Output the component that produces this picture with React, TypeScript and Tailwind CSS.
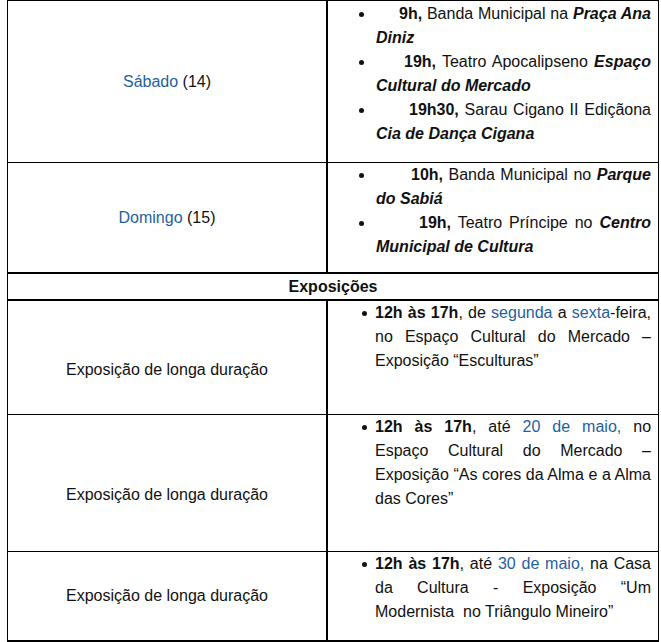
const blue = "text-[#1f5f9e]";

// one visual line of a justified paragraph; last lines are left aligned
const Line = ({ children, last = false, indent = "" }: { children: React.ReactNode; last?: boolean; indent?: string }) => (
  <span className={`block whitespace-nowrap ${indent} ${last ? "text-left" : "text-justify [text-align-last:justify]"}`}>
    {children}
  </span>
);

const Item = ({ children, dot = "big" }: { children: React.ReactNode; dot?: "big" | "small" }) => (
  <div className="flex">
    {dot === "big" ? (
      <div className="flex w-[48px] shrink-0 justify-end pr-[12px] pt-[10px]">
        <span className="block h-[5px] w-[5px] rounded-full bg-[#111]" />
      </div>
    ) : (
      <div className="flex w-[47px] shrink-0 justify-end pr-[8px] pt-[10px]">
        <span className="block h-[5px] w-[5px] rounded-full bg-[#111]" />
      </div>
    )}
    <div className="min-w-0 flex-1">{children}</div>
  </div>
);

const Place = ({ children }: { children: React.ReactNode }) => <b className="italic">{children}</b>;

const App = () => (
  <div className="h-[642px] w-[661px] overflow-hidden bg-white font-['Liberation_Sans',Arial,sans-serif] text-[16px] leading-6 text-[#111]">
    <div className="ml-[7px] w-[652px] border-x border-t border-black">
      {/* Sábado */}
      <div className="flex h-[162px] border-b border-black">
        <div className="flex w-[318px] items-center justify-center">
          <span>
            <span className={blue}>Sábado</span> (14)
          </span>
        </div>
        <div className="flex-1 border-l-2 border-black pr-[7px] pt-[1px]">
          <Item>
            <Line indent="pl-[23px]">
              <b>9h,</b> Banda Municipal na <Place>Praça Ana</Place>
            </Line>
            <Line last>
              <Place>Diniz</Place>
            </Line>
          </Item>
          <Item>
            <Line indent="pl-[28px]">
              <b>19h,</b> Teatro Apocalipseno <Place>Espaço</Place>
            </Line>
            <Line last>
              <Place>Cultural do Mercado</Place>
            </Line>
          </Item>
          <Item>
            <Line indent="pl-[33px]">
              <b>19h30,</b> Sarau Cigano II Ediçãona
            </Line>
            <Line last>
              <Place>Cia de Dança Cigana</Place>
            </Line>
          </Item>
        </div>
      </div>

      {/* Domingo */}
      <div className="flex h-[111px] border-b-2 border-black">
        <div className="flex w-[318px] items-center justify-center">
          <span>
            <span className={blue}>Domingo</span> (15)
          </span>
        </div>
        <div className="flex-1 border-l-2 border-black pr-[7px]">
          <Item>
            <Line indent="pl-[35px]">
              <b>10h,</b> Banda Municipal no <Place>Parque</Place>
            </Line>
            <Line last>
              <Place>do Sabiá</Place>
            </Line>
          </Item>
          <Item>
            <Line indent="pl-[43px]">
              <b>19h,</b> Teatro Príncipe no <Place>Centro</Place>
            </Line>
            <Line last>
              <Place>Municipal de Cultura</Place>
            </Line>
          </Item>
        </div>
      </div>

      {/* Exposições */}
      <div className="flex h-[27px] items-center justify-center border-b-2 border-black font-bold">Exposições</div>

      <div className="flex h-[114px] border-b border-black">
        <div className="flex w-[318px] items-center justify-center pt-6">Exposição de longa duração</div>
        <div className="flex-1 border-l-2 border-black pr-[7px]">
          <Item dot="small">
            <Line>
              <b>12h às 17h</b>, de <span className={blue}>segunda</span> a <span className={blue}>sexta</span>-feira,
            </Line>
            <Line>no Espaço Cultural do Mercado –</Line>
            <Line last>Exposição “Esculturas”</Line>
          </Item>
        </div>
      </div>

      <div className="flex h-[137px] border-b border-black">
        <div className="flex w-[318px] items-center justify-center pt-6">Exposição de longa duração</div>
        <div className="flex-1 border-l-2 border-black pr-[7px]">
          <Item dot="small">
            <Line>
              <b>12h às 17h</b>, até <span className={blue}>20 de maio,</span> no
            </Line>
            <Line>Espaço Cultural do Mercado –</Line>
            <Line>Exposição “As cores da Alma e a Alma</Line>
            <Line last>das Cores”</Line>
          </Item>
        </div>
      </div>

      <div className="flex h-[90px] border-b-2 border-black">
        <div className="flex w-[318px] items-center justify-center">Exposição de longa duração</div>
        <div className="flex-1 border-l-2 border-black pr-[7px]">
          <Item dot="small">
            <Line>
              <b>12h às 17h</b>, até <span className={blue}>30 de maio,</span> na Casa
            </Line>
            <Line>da Cultura - Exposição “Um</Line>
            <Line last>Modernista&nbsp; no Triângulo Mineiro”</Line>
          </Item>
        </div>
      </div>
    </div>
  </div>
);

export default App;
